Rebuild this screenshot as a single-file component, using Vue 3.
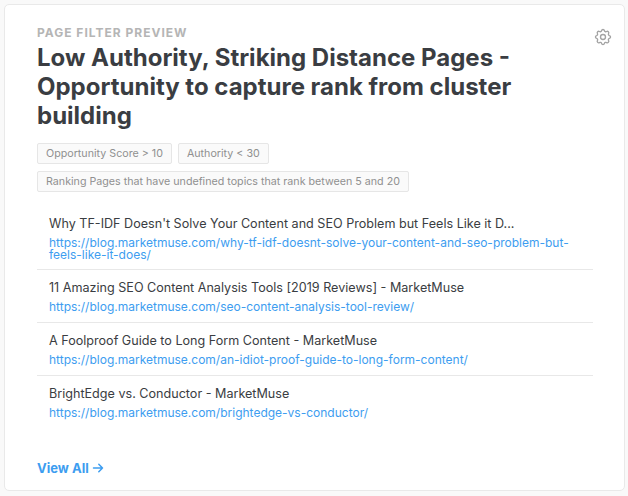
<script setup>
const pages = [
  { title: "Why TF-IDF Doesn't Solve Your Content and SEO Problem but Feels Like it D...", url: 'https://blog.marketmuse.com/why-tf-idf-doesnt-solve-your-content-and-seo-problem-but-feels-like-it-does/' },
  { title: '11 Amazing SEO Content Analysis Tools [2019 Reviews] - MarketMuse', url: 'https://blog.marketmuse.com/seo-content-analysis-tool-review/' },
  { title: 'A Foolproof Guide to Long Form Content - MarketMuse', url: 'https://blog.marketmuse.com/an-idiot-proof-guide-to-long-form-content/' },
  { title: 'BrightEdge vs. Conductor - MarketMuse', url: 'https://blog.marketmuse.com/brightedge-vs-conductor/' },
]
</script>

<template>
  <div class="page">
    <section class="card">
      <svg class="gear" viewBox="0 0 24 24" fill="none" stroke="#a3a3a3" stroke-width="1.6" stroke-linecap="round" stroke-linejoin="round">
        <path d="M10.3 4.3c.4-1.8 3-1.8 3.4 0a1.7 1.7 0 0 0 2.6 1.1c1.5-.9 3.3.8 2.4 2.4a1.7 1.7 0 0 0 1 2.5c1.8.4 1.8 3 0 3.4a1.7 1.7 0 0 0-1 2.6c.9 1.5-.9 3.3-2.4 2.4a1.7 1.7 0 0 0-2.6 1c-.4 1.8-3 1.8-3.4 0a1.7 1.7 0 0 0-2.6-1c-1.5.9-3.3-.9-2.4-2.4a1.7 1.7 0 0 0-1-2.6c-1.8-.4-1.8-3 0-3.4a1.7 1.7 0 0 0 1-2.5c-.9-1.6.9-3.3 2.4-2.4a1.7 1.7 0 0 0 2.6-1.1z" />
        <circle cx="12" cy="12" r="3" />
      </svg>
      <div class="eyebrow">PAGE FILTER PREVIEW</div>
      <h1>Low Authority, Striking Distance Pages - Opportunity to capture rank from cluster building</h1>
      <div class="tags">
        <span class="tag">Opportunity Score &gt; 10</span>
        <span class="tag">Authority &lt; 30</span>
        <span class="tag">Ranking Pages that have undefined topics that rank between 5 and 20</span>
      </div>
      <ul class="list">
        <li v-for="p in pages" :key="p.url">
          <div class="title">{{ p.title }}</div>
          <a class="url">{{ p.url }}</a>
        </li>
      </ul>
      <a class="view">View All <svg class="arrow" viewBox="0 0 12 12" fill="none" stroke="#3d9df0" stroke-width="1.5" stroke-linecap="round" stroke-linejoin="round"><path d="M1.5 6h9M6.8 2.3 10.5 6 6.8 9.7" /></svg></a>
    </section>
  </div>
</template>

<style>
html, body { margin: 0; background: #f9f9f9; }
</style>

<style scoped>
.page {
  width: 628px;
  height: 496px;
  padding: 4px 3px 5px 4px;
  box-sizing: border-box;
  font-family: Inter, sans-serif;
}
.card {
  position: relative;
  height: 487px;
  box-sizing: border-box;
  background: #fff;
  border: 1px solid #e9e9e9;
  border-radius: 5px;
  padding: 21px 26px 0 32px;
  display: flex;
  flex-direction: column;
}
.gear {
  position: absolute;
  top: 22px;
  right: 11px;
  width: 20px;
  height: 20px;
}
.eyebrow {
  font-size: 12px;
  line-height: 14px;
  font-weight: 700;
  letter-spacing: 1px;
  color: #b5b5b5;
}
h1 {
  margin: 3px 0 0;
  font-size: 24px;
  line-height: 29px;
  font-weight: 700;
  color: #3a3d42;
}
.tags {
  display: flex;
  flex-wrap: wrap;
  gap: 7px 6px;
  margin-top: 13px;
}
.tag {
  font-size: 10.7px;
  line-height: 19px;
  color: #909090;
  background: #fafafa;
  border: 1px solid #e6e6e6;
  border-radius: 2px;
  padding: 0 8px;
}
.list {
  list-style: none;
  margin: 14px 0 0;
  padding: 0;
  width: 556px;
}
.list li {
  padding: 8px 12px 9px;
  border-bottom: 1px solid #e8e8e8;
}
.list li:first-child { padding-bottom: 8px; }
.list li:last-child { border-bottom: 0; }
.title {
  font-size: 12.6px;
  line-height: 20px;
  color: #3a3d42;
  white-space: nowrap;
}
.url {
  display: block;
  font-size: 12px;
  line-height: 12px;
  margin-top: 3px;
  color: #3d9df0;
  overflow-wrap: anywhere;
}
.view {
  margin-top: auto;
  margin-bottom: 14px;
  font-size: 13px;
  line-height: 16px;
  font-weight: 700;
  color: #3d9df0;
  display: flex;
  align-items: center;
  gap: 3px;
}
.arrow { width: 12px; height: 12px; }
</style>
